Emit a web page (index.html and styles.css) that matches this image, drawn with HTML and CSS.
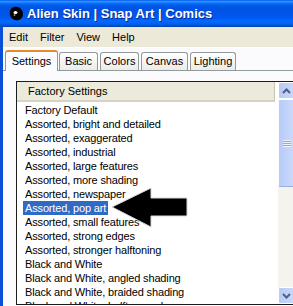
FILE: index.html
```html
<!DOCTYPE html>
<html lang="en">
<head>
    <meta charset="UTF-8">
    <title>Alien Skin | Snap Art | Comics</title>
    <link rel="stylesheet" href="styles.css">
</head>
<body>
    <div class="window">
        <!-- title bar -->
        <div class="titlebar">
            <svg class="app-icon" width="16" height="16" viewBox="0 0 16 16">
                <path d="M3 2 C7 -1 14 2 14 8 C14 13 10 15 6 14 C2 13 0 9 1 5 C1.5 3.5 2 2.5 3 2 Z" fill="#000"/>
                <ellipse cx="6.5" cy="6.5" rx="2" ry="1.6" fill="#fff"/>
                <ellipse cx="5.5" cy="9" rx="1" ry="0.8" fill="#bbb"/>
            </svg>
            <span class="title">Alien Skin | Snap Art | Comics</span>
        </div>

        <!-- menu -->
        <div class="menubar">
            <span>Edit</span>
            <span>Filter</span>
            <span>View</span>
            <span>Help</span>
        </div>

        <!-- tabs -->
        <div class="tabs">
            <div class="tab active tab-settings">Settings</div>
            <div class="tab tab-basic">Basic</div>
            <div class="tab tab-colors">Colors</div>
            <div class="tab tab-canvas">Canvas</div>
            <div class="tab tab-lighting">Lighting</div>
        </div>

        <div class="page">
            <div class="list">
                <div class="list-main">
                    <div class="list-header">Factory Settings</div>
                    <div class="rows">
                        <div class="row"><span>Factory Default</span></div>
                        <div class="row"><span>Assorted, bright and detailed</span></div>
                        <div class="row"><span>Assorted, exaggerated</span></div>
                        <div class="row"><span>Assorted, industrial</span></div>
                        <div class="row"><span>Assorted, large features</span></div>
                        <div class="row"><span>Assorted, more shading</span></div>
                        <div class="row"><span>Assorted, newspaper</span></div>
                        <div class="row selected"><span>Assorted, pop art</span></div>
                        <div class="row"><span>Assorted, small features</span></div>
                        <div class="row"><span>Assorted, strong edges</span></div>
                        <div class="row"><span>Assorted, stronger halftoning</span></div>
                        <div class="row"><span>Black and White</span></div>
                        <div class="row"><span>Black and White, angled shading</span></div>
                        <div class="row"><span>Black and White, braided shading</span></div>
                        <div class="row"><span>Black and White, halftone only</span></div>
                    </div>
                </div>
                <div class="scrollbar">
                    <div class="sb-btn">
                        <svg width="9" height="6" viewBox="0 0 9 6"><path d="M1 5 L4.5 1.5 L8 5" fill="none" stroke="#4d6185" stroke-width="2"/></svg>
                    </div>
                    <div class="sb-thumb">
                        <div class="grip"></div>
                    </div>
                    <div class="sb-track"></div>
                    <div class="sb-btn">
                        <svg width="9" height="6" viewBox="0 0 9 6"><path d="M1 1 L4.5 4.5 L8 1" fill="none" stroke="#4d6185" stroke-width="2"/></svg>
                    </div>
                </div>
            </div>

            <!-- pointer arrow over the list -->
            <svg class="pointer" width="84" height="46" viewBox="0 0 84 46">
                <polygon points="3,22 42,3 42,13 78,13 78,31 42,31 42,42" fill="#000" stroke="#d8d8d8" stroke-width="1"/>
            </svg>
        </div>
    </div>
</body>
</html>
```

FILE: styles.css
```css
body {
    margin: 0;
    padding: 0;
    width: 293px;
    height: 306px;
    overflow: hidden;
    font-family: "Liberation Sans", Arial, sans-serif;
    font-size: 11px;
    background: #fff;
}
.window {
    border-left: 3px solid #0a4fd8;
    height: 306px;
    box-sizing: border-box;
    background: #fbfbfd;
}
.titlebar {
    height: 27px;
    display: flex;
    align-items: center;
    margin-left: -3px;
    padding-left: 9px;
    background: linear-gradient(#0058ee 0%, #3593ff 6%, #127dff 10%, #0262ee 16%, #0054e3 26%, #0055eb 56%, #005bf5 68%, #026afe 78%, #0062ef 88%, #0052d6 94%, #0040ab 100%);
}
.app-icon {
    margin-right: 2px;
}
.title {
    color: #fff;
    font-weight: bold;
    font-size: 13px;
    text-shadow: 1px 1px 0 #0a2c8c;
}
.menubar {
    height: 20px;
    display: flex;
    align-items: center;
    gap: 12px;
    padding-left: 6px;
    background: #ece9d8;
    border-bottom: 1px solid #fff;
}
.tabs {
    height: 22px;
    display: flex;
    align-items: flex-end;
    padding-left: 2px;
    background: #fbfbfd;
    border-bottom: 1px solid #919b9c;
}
.tab {
    flex: none;
    box-sizing: border-box;
    height: 18px;
    line-height: 17px;
    text-align: center;
    margin-right: 2px;
    border: 1px solid #919b9c;
    border-bottom: none;
    border-radius: 3px 3px 0 0;
    background: linear-gradient(#fff, #ecebe6);
}
.tab.active {
    height: 21px;
    line-height: 18px;
    margin-right: 1px;
    margin-bottom: -1px;
    border-top: 2px solid #e68b2c;
    background: #fcfcfe;
}
.tab-settings { width: 53px; }
.tab-basic { width: 39px; }
.tab-colors { width: 39px; }
.tab-canvas { width: 47px; }
.tab-lighting { width: 46px; }
.page {
    position: relative;
    padding: 10px 0 0 13px;
}
.list {
    display: flex;
    width: 285px;
    height: 224px;
    border: 1px solid #1c1c1c;
    background: #fff;
    box-sizing: border-box;
    overflow: hidden;
}
.list-main {
    width: 258px;
    display: flex;
    flex-direction: column;
}
.list-header {
    height: 18px;
    line-height: 18px;
    padding-left: 11px;
    background: #ebeadb;
    border-bottom: 2px solid #d6d3c4;
    border-right: 1px solid #c7c5b2;
}
.rows {
    padding-top: 1px;
    overflow: hidden;
}
.row {
    height: 14px;
    line-height: 14px;
    padding-left: 6px;
    white-space: nowrap;
    letter-spacing: -0.15px;
}
.row span {
    padding: 0 2px;
    display: inline-block;
}
.row.selected span {
    background: #316ac5;
    color: #fff;
}
.scrollbar {
    margin-left: 3px;
    width: 17px;
    display: flex;
    flex-direction: column;
    background: #f4f3ee;
}
.sb-btn {
    height: 17px;
    display: flex;
    align-items: center;
    justify-content: center;
    background: linear-gradient(90deg, #b9cbf3, #c9d8fc);
    border: 1px solid #fff;
    border-radius: 2px;
    box-sizing: border-box;
}
.sb-thumb {
    height: 88px;
    display: flex;
    align-items: center;
    justify-content: center;
    background: linear-gradient(90deg, #b7cbf8, #cbdafc);
    border: 1px solid #fff;
    border-bottom-color: #98b1e4;
    border-radius: 2px;
    box-sizing: border-box;
}
.grip {
    width: 8px;
    height: 7px;
    background: repeating-linear-gradient(#eef4fe 0, #eef4fe 1px, #8faae0 1px, #8faae0 2px);
}
.sb-track {
    flex: 1;
}
.pointer {
    position: absolute;
    left: 106px;
    top: 114px;
}
```
